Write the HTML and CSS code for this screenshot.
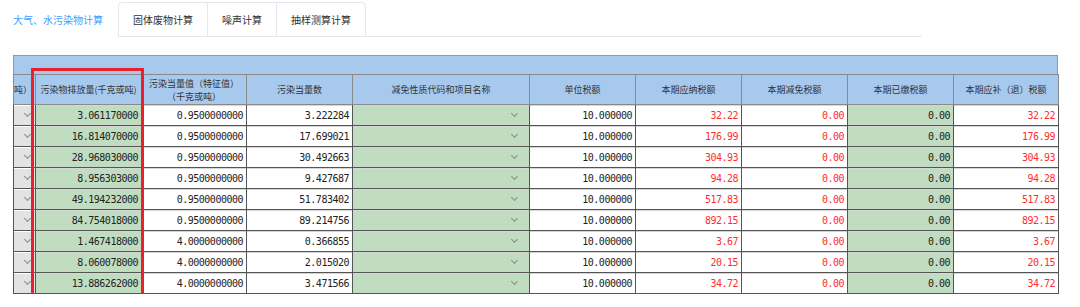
FILE: index.html
```html
<!DOCTYPE html>
<html lang="zh-CN">
<head>
    <meta charset="UTF-8">
    <title>税源计算</title>
    <link rel="stylesheet" href="styles.css">
</head>
<body>
    <div class="tabs">
        <div class="tab tab-active">大气、水污染物计算</div>
        <div class="tab-group">
            <div class="tab">固体废物计算</div>
            <div class="tab">噪声计算</div>
            <div class="tab">抽样测算计算</div>
        </div>
        <div class="tab-rest"></div>
    </div>

    <div class="grid-wrap">
        <div class="grid-band"></div>
        <table class="grid">
            <colgroup>
                <col style="width:22px"><col style="width:106px"><col style="width:105px"><col style="width:106px">
                <col style="width:177px"><col style="width:106px"><col style="width:106px"><col style="width:106px">
                <col style="width:106px"><col style="width:105px">
            </colgroup>
            <thead>
                <tr>
                    <th class="unit">吨）</th>
                    <th>污染物排放量(千克或吨)</th>
                    <th>污染当量值（特征值）<br>（千克或吨）</th>
                    <th>污染当量数</th>
                    <th>减免性质代码和项目名称</th>
                    <th>单位税额</th>
                    <th>本期应纳税额</th>
                    <th>本期减免税额</th>
                    <th>本期已缴税额</th>
                    <th>本期应补（退）税额</th>
                </tr>
            </thead>
            <tbody>
                <tr>
                    <td class="sel"><span class="chev"></span></td>
                    <td class="edit">3.061170000</td><td>0.9500000000</td><td>3.222284</td>
                    <td class="edit drop"><span class="chev"></span></td>
                    <td>10.000000</td><td class="red">32.22</td><td class="red">0.00</td>
                    <td class="edit">0.00</td><td class="red">32.22</td>
                </tr>
                <tr>
                    <td class="sel"><span class="chev"></span></td>
                    <td class="edit">16.814070000</td><td>0.9500000000</td><td>17.699021</td>
                    <td class="edit drop"><span class="chev"></span></td>
                    <td>10.000000</td><td class="red">176.99</td><td class="red">0.00</td>
                    <td class="edit">0.00</td><td class="red">176.99</td>
                </tr>
                <tr>
                    <td class="sel"><span class="chev"></span></td>
                    <td class="edit">28.968030000</td><td>0.9500000000</td><td>30.492663</td>
                    <td class="edit drop"><span class="chev"></span></td>
                    <td>10.000000</td><td class="red">304.93</td><td class="red">0.00</td>
                    <td class="edit">0.00</td><td class="red">304.93</td>
                </tr>
                <tr>
                    <td class="sel"><span class="chev"></span></td>
                    <td class="edit">8.956303000</td><td>0.9500000000</td><td>9.427687</td>
                    <td class="edit drop"><span class="chev"></span></td>
                    <td>10.000000</td><td class="red">94.28</td><td class="red">0.00</td>
                    <td class="edit">0.00</td><td class="red">94.28</td>
                </tr>
                <tr>
                    <td class="sel"><span class="chev"></span></td>
                    <td class="edit">49.194232000</td><td>0.9500000000</td><td>51.783402</td>
                    <td class="edit drop"><span class="chev"></span></td>
                    <td>10.000000</td><td class="red">517.83</td><td class="red">0.00</td>
                    <td class="edit">0.00</td><td class="red">517.83</td>
                </tr>
                <tr>
                    <td class="sel"><span class="chev"></span></td>
                    <td class="edit">84.754018000</td><td>0.9500000000</td><td>89.214756</td>
                    <td class="edit drop"><span class="chev"></span></td>
                    <td>10.000000</td><td class="red">892.15</td><td class="red">0.00</td>
                    <td class="edit">0.00</td><td class="red">892.15</td>
                </tr>
                <tr>
                    <td class="sel"><span class="chev"></span></td>
                    <td class="edit">1.467418000</td><td>4.0000000000</td><td>0.366855</td>
                    <td class="edit drop"><span class="chev"></span></td>
                    <td>10.000000</td><td class="red">3.67</td><td class="red">0.00</td>
                    <td class="edit">0.00</td><td class="red">3.67</td>
                </tr>
                <tr>
                    <td class="sel"><span class="chev"></span></td>
                    <td class="edit">8.060078000</td><td>4.0000000000</td><td>2.015020</td>
                    <td class="edit drop"><span class="chev"></span></td>
                    <td>10.000000</td><td class="red">20.15</td><td class="red">0.00</td>
                    <td class="edit">0.00</td><td class="red">20.15</td>
                </tr>
                <tr>
                    <td class="sel"><span class="chev"></span></td>
                    <td class="edit">13.886262000</td><td>4.0000000000</td><td>3.471566</td>
                    <td class="edit drop"><span class="chev"></span></td>
                    <td>10.000000</td><td class="red">34.72</td><td class="red">0.00</td>
                    <td class="edit">0.00</td><td class="red">34.72</td>
                </tr>
            </tbody>
        </table>
        <div class="mark"></div>
    </div>
</body>
</html>
```

FILE: styles.css
```css
body {
    margin: 0;
    font-family: "Noto Sans CJK SC", sans-serif;
    background: #fff;
    color: #303133;
}
.tabs {
    display: flex;
    width: 922px;
    height: 35px;
    margin-top: 2px;
    font-size: 10px;
}
.tab {
    padding: 0 14px;
    line-height: 33px;
    color: #303133;
    border-left: 1px solid #e4e7ed;
}
.tab-active {
    padding: 0 15px 0 13px;
    line-height: 35px;
    color: #409eff;
    border-left: none;
}
.tab-group {
    display: flex;
    border: 1px solid #e4e7ed;
    border-radius: 4px 4px 0 0;
}
.tab-group .tab:first-child {
    border-left: none;
}
.tab-rest {
    flex: 1;
    border-bottom: 1px solid #e4e7ed;
}
.grid-wrap {
    position: relative;
    width: 1045px;
    margin: 18px 0 0 13px;
}
.grid-band {
    height: 18px;
    background: #a8c9ee;
    border: 1px solid #9a9a9a;
    border-bottom: none;
}
.grid {
    width: 1045px;
    border-collapse: collapse;
    table-layout: fixed;
}
.grid th {
    height: 29px;
    padding: 0 2px;
    background: #a8c9ee;
    border: 1px solid #8a8a8a;
    font-weight: normal;
    font-size: 9px;
    line-height: 13px;
    color: #333;
}
.grid th.unit {
    padding: 0 3px 0 0;
    text-align: right;
    white-space: nowrap;
}
.grid td {
    height: 20px;
    padding: 0 3px;
    border: 1px solid #555;
    box-shadow: inset 0 1px 0 #d6d6d6;
    text-align: right;
    font-family: "DejaVu Sans Mono", monospace;
    font-size: 10px;
    letter-spacing: -0.5px;
    color: #222;
}
.grid td.edit {
    background: #c1ddc1;
}
.grid td.red {
    color: #ff2d2d;
}
.grid td.sel {
    background: #e3e3e3;
    box-shadow: inset 0 1px 0 #fff;
    padding-right: 5px;
}
.grid td.drop {
    padding-right: 12px;
}
.chev {
    display: inline-block;
    width: 4px;
    height: 4px;
    margin-bottom: 3px;
    border-right: 1px solid #8a8a8a;
    border-bottom: 1px solid #8a8a8a;
    transform: rotate(45deg);
}
.mark {
    position: absolute;
    top: 13px;
    left: 18px;
    width: 113px;
    height: 232px;
    box-sizing: border-box;
    border: 3px solid #e8212b;
}
```
